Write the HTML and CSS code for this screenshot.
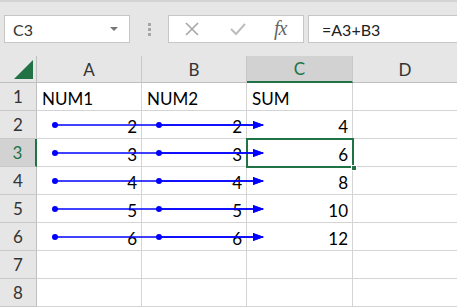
FILE: index.html
```html
<!DOCTYPE html>
<html>
<head>
<meta charset="utf-8">
<link rel="stylesheet" href="styles.css">
</head>
<body>
<div class="app">
  <div class="topline"></div>
  <div class="toolbar">
    <div class="namebox"><span class="ref">C3</span><span class="caret"></span></div>
    <div class="grip"><i></i><i></i><i></i></div>
    <div class="buttons">
      <svg class="btn-x" width="14" height="14" viewBox="0 0 14 14"><path d="M1 1L13 13M13 1L1 13" stroke="#a6a6a6" stroke-width="1.6" fill="none"/></svg>
      <svg class="btn-ok" width="16" height="14" viewBox="0 0 16 14"><path d="M1 7L6 12L15 2" stroke="#bdbdbd" stroke-width="2" fill="none"/></svg>
      <span class="fx">fx</span>
    </div>
    <div class="formula">=A3+B3</div>
  </div>
  <div class="sheet">
    <div class="grid">
      <div class="corner"><svg width="20" height="20" viewBox="0 0 20 20"><path d="M19 0L19 19L0 19Z" fill="#217346"/></svg></div>
      <div class="ch">A</div><div class="ch">B</div><div class="ch sel">C</div><div class="ch last">D</div>

      <div class="rh">1</div><div class="c">NUM1</div><div class="c">NUM2</div><div class="c">SUM</div><div class="c last"></div>
      <div class="rh">2</div><div class="c n">2</div><div class="c n">2</div><div class="c n">4</div><div class="c last"></div>
      <div class="rh sel">3</div><div class="c n">3</div><div class="c n">3</div><div class="c n">6</div><div class="c last"></div>
      <div class="rh">4</div><div class="c n">4</div><div class="c n">4</div><div class="c n">8</div><div class="c last"></div>
      <div class="rh">5</div><div class="c n">5</div><div class="c n">5</div><div class="c n">10</div><div class="c last"></div>
      <div class="rh">6</div><div class="c n">6</div><div class="c n">6</div><div class="c n">12</div><div class="c last"></div>
      <div class="rh">7</div><div class="c"></div><div class="c"></div><div class="c"></div><div class="c last"></div>
      <div class="rh">8</div><div class="c"></div><div class="c"></div><div class="c"></div><div class="c last"></div>
    </div>
    <div class="selection"><span class="handle"></span></div>
    <svg class="arrows" width="457" height="252" viewBox="0 56 457 252">
      <defs>
        <marker id="ah" markerWidth="11" markerHeight="8" refX="10" refY="4" orient="auto" markerUnits="userSpaceOnUse">
          <path d="M0 0L11 4L0 8Z" fill="#0000ff"/>
        </marker>
      </defs>
      <g stroke="#0000ff" stroke-width="1.3" fill="#0000ff">
        <line x1="55" y1="125" x2="263" y2="125" marker-end="url(#ah)"/>
        <line x1="159" y1="125" x2="263" y2="125" marker-end="url(#ah)"/>
        <circle cx="55" cy="125" r="3" stroke="none"/><circle cx="159" cy="125" r="3" stroke="none"/>
        <line x1="55" y1="153" x2="263" y2="153" marker-end="url(#ah)"/>
        <line x1="159" y1="153" x2="263" y2="153" marker-end="url(#ah)"/>
        <circle cx="55" cy="153" r="3" stroke="none"/><circle cx="159" cy="153" r="3" stroke="none"/>
        <line x1="55" y1="181" x2="263" y2="181" marker-end="url(#ah)"/>
        <line x1="159" y1="181" x2="263" y2="181" marker-end="url(#ah)"/>
        <circle cx="55" cy="181" r="3" stroke="none"/><circle cx="159" cy="181" r="3" stroke="none"/>
        <line x1="55" y1="209" x2="263" y2="209" marker-end="url(#ah)"/>
        <line x1="159" y1="209" x2="263" y2="209" marker-end="url(#ah)"/>
        <circle cx="55" cy="209" r="3" stroke="none"/><circle cx="159" cy="209" r="3" stroke="none"/>
        <line x1="55" y1="237" x2="263" y2="237" marker-end="url(#ah)"/>
        <line x1="159" y1="237" x2="263" y2="237" marker-end="url(#ah)"/>
        <circle cx="55" cy="237" r="3" stroke="none"/><circle cx="159" cy="237" r="3" stroke="none"/>
      </g>
    </svg>
  </div>
</div>
</body>
</html>
```
FILE: styles.css
```css
* { box-sizing: border-box; }
html, body { margin: 0; padding: 0; }
body {
  width: 457px;
  height: 308px;
  overflow: hidden;
  background: #e6e6e6;
  font-family: Lato, "Open Sans", sans-serif;
}
.app { width: 457px; height: 308px; }
.topline { height: 2px; background: #d4d4d4; }
.toolbar {
  height: 54px;
  display: flex;
  align-items: flex-start;
  padding-top: 13px;
  padding-left: 4px;
}
.namebox {
  width: 126px;
  height: 28px;
  background: #fff;
  border: 1px solid #c6c6c6;
  display: flex;
  align-items: center;
  justify-content: space-between;
  padding: 0 11px 0 8px;
  font-size: 16px;
  color: #333;
}
.caret {
  width: 0; height: 0;
  border-left: 4px solid transparent;
  border-right: 4px solid transparent;
  border-top: 4px solid #777;
}
.grip {
  width: 38px;
  height: 28px;
  display: flex;
  flex-direction: column;
  align-items: center;
  justify-content: center;
  gap: 2px;
}
.grip i { width: 3px; height: 3px; background: #a6a6a6; display: block; }
.buttons {
  width: 136px;
  height: 28px;
  background: #fff;
  border: 1px solid #c6c6c6;
  display: flex;
  align-items: center;
  padding-left: 16px;
}
.btn-x { margin-right: 31px; }
.btn-ok { margin-right: 28px; }
.fx {
  font-family: "Liberation Serif", serif;
  font-style: italic;
  font-size: 20px;
  color: #666;
  letter-spacing: -1px;
  margin-top: -2px;
}
.formula {
  margin-left: 4px;
  flex: 1;
  height: 28px;
  background: #fff;
  border: 1px solid #c6c6c6;
  border-right: none;
  padding-left: 13px;
  display: flex;
  align-items: center;
  font-size: 16px;
  color: #222;
}
.sheet { position: relative; height: 252px; background: #fff; }
.grid {
  display: grid;
  grid-template-columns: 37px 105px 105px 106px 104px;
  grid-template-rows: 27px repeat(8, 28px);
}
.corner {
  background: #e6e6e6;
  border-right: 1px solid #bfbfbf;
  border-bottom: 1px solid #bfbfbf;
  display: flex;
  align-items: flex-end;
  justify-content: flex-end;
  padding: 0 2px 2px 0;
}
.ch {
  background: #e6e6e6;
  border-right: 1px solid #c8c8c8;
  border-bottom: 1px solid #bfbfbf;
  display: flex;
  align-items: center;
  justify-content: center;
  font-size: 17px;
  color: #333;
}
.ch.sel { background: #d2d2d2; border-bottom: 2px solid #217346; color: #217346; }
.ch.last { border-right: none; }
.rh {
  background: #e6e6e6;
  border-right: 1px solid #bfbfbf;
  border-bottom: 1px solid #c8c8c8;
  display: flex;
  align-items: center;
  justify-content: center;
  font-size: 17px;
  color: #333;
}
.rh.sel { background: #d2d2d2; border-right: 2px solid #217346; color: #217346; }
.c {
  border-right: 1px solid #d4d4d4;
  border-bottom: 1px solid #d4d4d4;
  display: flex;
  align-items: center;
  padding: 3px 4px 0 5px;
  font-size: 17px;
  color: #000;
}
.c.n { justify-content: flex-end; }
.c.last { border-right: none; }
.selection {
  position: absolute;
  left: 246px;
  top: 82px;
  width: 108px;
  height: 30px;
  border: 2px solid #217346;
}
.handle {
  position: absolute;
  right: -5px;
  bottom: -5px;
  width: 6px;
  height: 6px;
  background: #217346;
  border: 1px solid #fff;
}
.arrows { position: absolute; left: 0; top: 0; }
```
